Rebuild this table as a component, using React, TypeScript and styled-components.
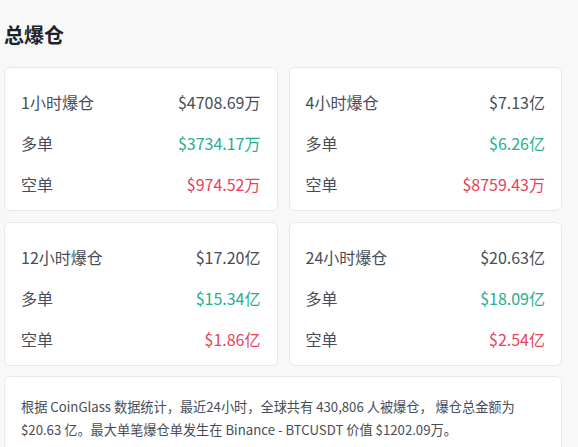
import React from "react";
import styled, { createGlobalStyle } from "styled-components";

const Global = createGlobalStyle`
  html, body { margin: 0; padding: 0; background: #f8f8f8; }
  body { font-family: "Noto Sans CJK SC", "Noto Sans", sans-serif; }
`;

const Page = styled.div`
  padding: 21px 16px 0 4px;
`;

const Title = styled.h2`
  margin: 0 0 18px 0;
  font-size: 20px;
  line-height: 28px;
  font-weight: 700;
  color: #1e2329;
`;

const Grid = styled.div`
  display: grid;
  grid-template-columns: 1fr 1fr;
  column-gap: 11px;
  row-gap: 11px;
`;

const Card = styled.div`
  background: #fff;
  border: 1px solid #e8e8e8;
  border-radius: 6px;
  padding: 13px 16px 7px 16px;
  box-sizing: border-box;
  height: 144px;
`;

const Row = styled.div`
  display: flex;
  justify-content: space-between;
  align-items: center;
  height: 41px;
  font-size: 16px;
`;

const Label = styled.span`
  color: #474d57;
`;

const Value = styled.span<{ $tone: "neutral" | "up" | "down" }>`
  color: ${(p) =>
    p.$tone === "up" ? "#22b08f" : p.$tone === "down" ? "#e9415a" : "#474d57"};
`;

const Note = styled.div`
  margin-top: 10px;
  background: #fff;
  border: 1px solid #e8e8e8;
  border-radius: 6px;
  padding: 19px 16px 20px 16px;
  font-size: 13.2px;
  line-height: 22.5px;
  color: #474d57;
`;

type Stat = { label: string; total: string; long: string; short: string };

const stats: Stat[] = [
  { label: "1小时爆仓", total: "$4708.69万", long: "$3734.17万", short: "$974.52万" },
  { label: "4小时爆仓", total: "$7.13亿", long: "$6.26亿", short: "$8759.43万" },
  { label: "12小时爆仓", total: "$17.20亿", long: "$15.34亿", short: "$1.86亿" },
  { label: "24小时爆仓", total: "$20.63亿", long: "$18.09亿", short: "$2.54亿" },
];

export default function App() {
  return (
    <>
      <Global />
      <Page>
        <Title>总爆仓</Title>
        <Grid>
          {stats.map((s) => (
            <Card key={s.label}>
              <Row>
                <Label>{s.label}</Label>
                <Value $tone="neutral">{s.total}</Value>
              </Row>
              <Row>
                <Label>多单</Label>
                <Value $tone="up">{s.long}</Value>
              </Row>
              <Row>
                <Label>空单</Label>
                <Value $tone="down">{s.short}</Value>
              </Row>
            </Card>
          ))}
        </Grid>
        <Note>
          根据 CoinGlass 数据统计，最近24小时，全球共有 430,806 人被爆仓， 爆仓总金额为 $20.63 亿。最大单笔爆仓单发生在 Binance - BTCUSDT 价值 $1202.09万。
        </Note>
      </Page>
    </>
  );
}
